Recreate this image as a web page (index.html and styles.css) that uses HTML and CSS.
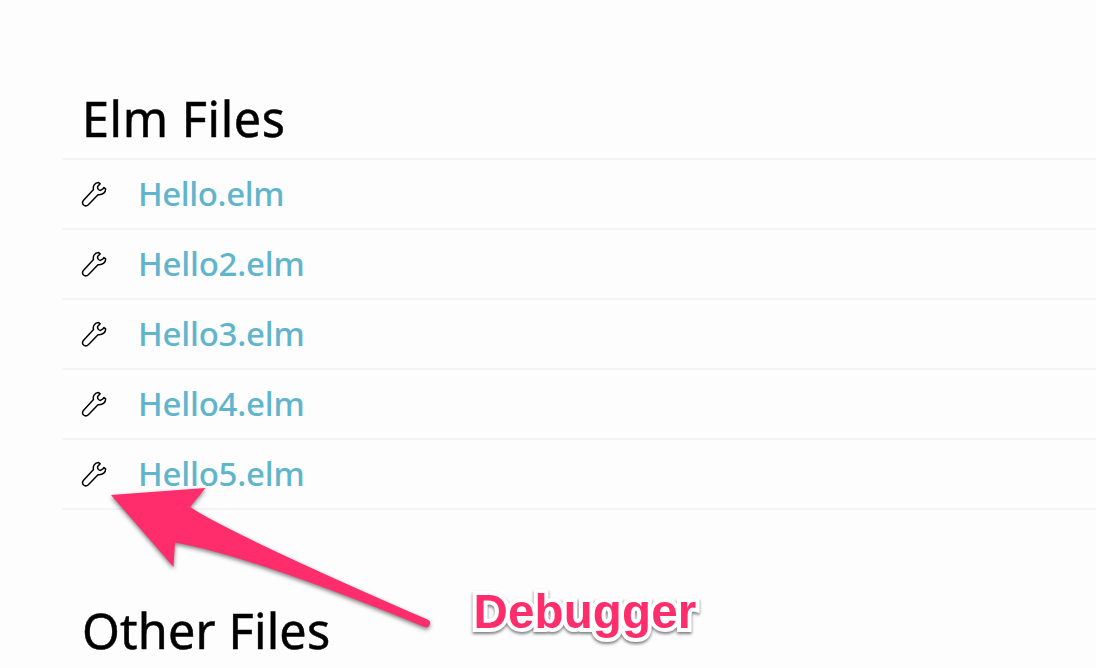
FILE: index.html
```
<!DOCTYPE html>
<html lang="en">
<head>
<meta charset="utf-8">
<title>Elm Files</title>
<link rel="stylesheet" href="styles.css">
</head>
<body>
<svg class="defs" width="0" height="0" aria-hidden="true">
  <symbol id="wrench" viewBox="0 0 26 26">
    <path d="M12.500 8.600C11.600 5 13.600 1.800 17.600 1.600L19.200 2.800L16.600 5.600C16.400 7.600 17.400 9.200 19.400 9.400L22 7.800L23 6.600L24.600 7.800C24.800 11 22 14.200 17 13.700L7.600 23.400C6 25 3.800 25 2.600 24C1.200 22.600 1.400 20.600 2.600 19.200Z"/>
  </symbol>
</svg>
<main class="page">
  <section class="files">
    <h2 class="title elm">Elm Files</h2>
    <div class="row"><svg class="icon"><use href="#wrench"/></svg><a class="link short">Hello.elm</a></div>
    <div class="row"><svg class="icon"><use href="#wrench"/></svg><a class="link">Hello2.elm</a></div>
    <div class="row"><svg class="icon"><use href="#wrench"/></svg><a class="link">Hello3.elm</a></div>
    <div class="row"><svg class="icon"><use href="#wrench"/></svg><a class="link">Hello4.elm</a></div>
    <div class="row"><svg class="icon"><use href="#wrench"/></svg><a class="link">Hello5.elm</a></div>
  </section>
  <section class="files">
    <h2 class="title other">Other Files</h2>
  </section>
  <svg class="arrow" viewBox="0 0 1096 668" aria-hidden="true">
    <path d="M111 495L205.500 488L190 507Q231 534 427.500 619.500A4 4 0 0 1 424.500 627Q251 556 175 542.500L173.500 567Z"/>
  </svg>
  <div class="note">Debugger</div>
</main>
</body>
</html>
```
FILE: styles.css
```
* { box-sizing: border-box; }
body {
  margin: 0;
  background: #fdfdfd;
  color: #000;
  font-family: "Noto Sans", "Open Sans", sans-serif;
}
.defs { position: absolute; }
.page {
  position: relative;
  height: 668px;
  overflow: hidden;
  padding: 78px 0 0 62px;
}
.files { margin-bottom: 80px; }
.title {
  margin: 0;
  height: 82px;
  padding-left: 20px;
  border-bottom: 2px solid #f4f4f4;
  font-size: 48.5px;
  line-height: 80px;
  font-weight: 400;
  -webkit-text-stroke: 0.5px #000;
  white-space: nowrap;
}
.elm { letter-spacing: 0.6px; }
.other { letter-spacing: 0.2px; }
.row {
  display: flex;
  align-items: center;
  gap: 31px;
  height: 70px;
  padding-left: 19px;
  border-bottom: 2px solid #f4f4f4;
}
.icon {
  width: 26px;
  height: 26px;
  fill: none;
  stroke: #000;
  stroke-width: 1.5;
  stroke-linejoin: round;
}
.link {
  color: #60b5cc;
  font-size: 33px;
  font-weight: 500;
  line-height: 68px;
  letter-spacing: -0.2px;
}
.short { letter-spacing: -0.4px; }
.arrow {
  position: absolute;
  inset: 0;
  width: 1096px;
  height: 668px;
  fill: #ff2d6c;
  filter: drop-shadow(0 2px 2px rgba(0, 0, 0, 0.5));
}
.note {
  position: absolute;
  left: 473.5px;
  top: 585px;
  color: #ff2d6c;
  font: bold 47.5px/54px "Liberation Sans", Arial, sans-serif;
  -webkit-text-stroke: 8px #fff;
  paint-order: stroke fill;
  stroke-linejoin: round;
  letter-spacing: 0.15px;
  filter: drop-shadow(0 2px 1.5px rgba(0, 0, 0, 0.5));
}
```
